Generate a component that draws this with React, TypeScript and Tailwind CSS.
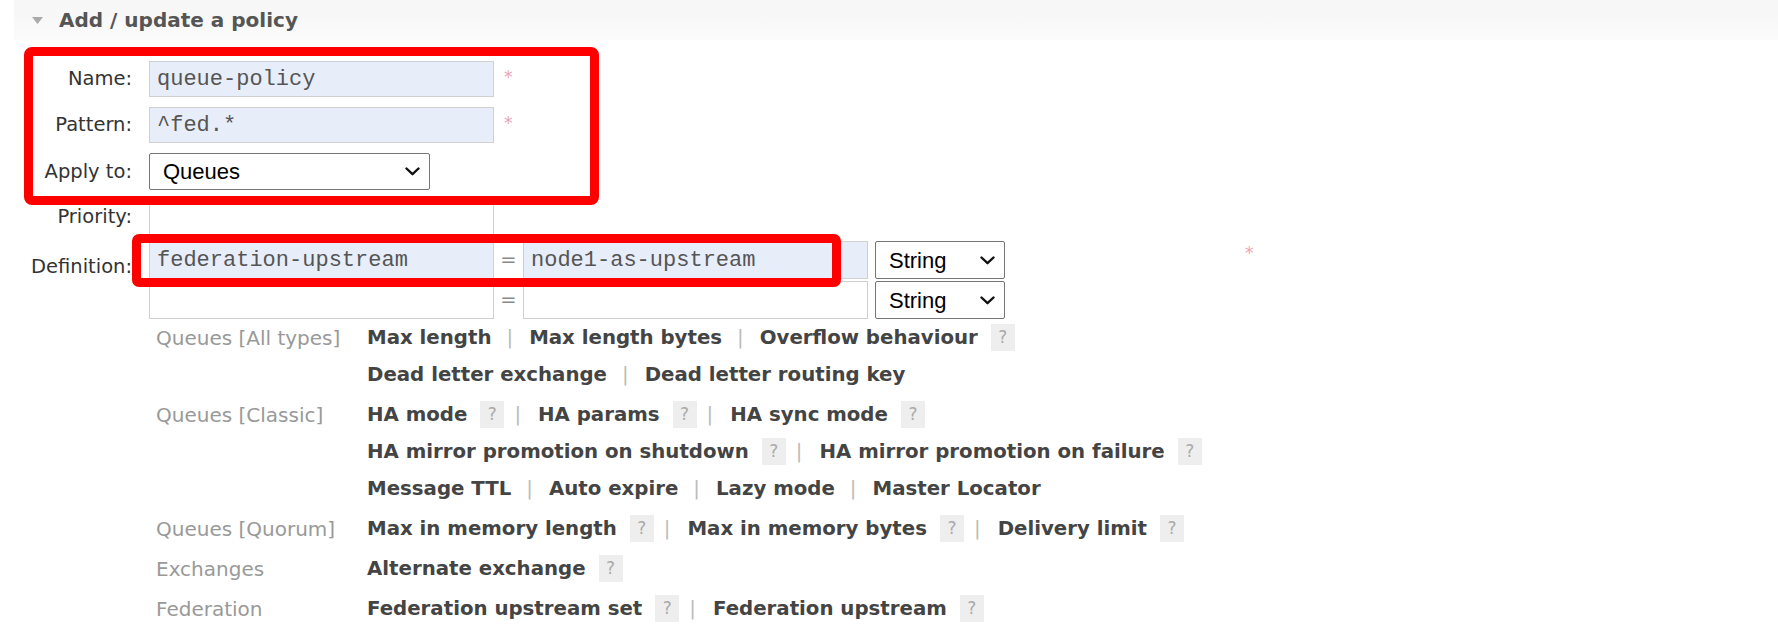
import React, { Fragment } from "react";

type Item = { t: string; help?: boolean };

const Help = () => (
  <span className="inline-flex items-center justify-center w-[24px] h-[27px] bg-[#eeeeee] text-[#aaaaaa] text-[17px] font-normal ml-[13px]">
    ?
  </span>
);

const Line = ({ items }: { items: Item[] }) => (
  <div className="h-[37px] flex items-center whitespace-nowrap">
    {items.map((it, i) => (
      <Fragment key={i}>
        {i > 0 && (
          <span
            className={
              items[i - 1].help
                ? "text-[#bbbbbb] font-normal ml-[10px] mr-[17px]"
                : "text-[#bbbbbb] font-normal ml-[15px] mr-[16px]"
            }
          >
            |
          </span>
        )}
        <span className="font-bold text-[#444444]">{it.t}</span>
        {it.help && <Help />}
      </Fragment>
    ))}
  </div>
);

const Group = ({ label, lines, first }: { label: string; lines: Item[][]; first?: boolean }) => (
  <div className={first ? "flex" : "flex mt-[3px]"}>
    <div className="w-[367px] pl-[156px] shrink-0 h-[37px] flex items-center whitespace-nowrap text-[#999999] text-[20px]">
      {label}
    </div>
    <div className="flex flex-col">
      {lines.map((l, i) => (
        <Line key={i} items={l} />
      ))}
    </div>
  </div>
);

const Chevron = () => (
  <svg width="15" height="9" viewBox="0 0 15 9" fill="none">
    <path d="M1.5 1.5 L7.5 7.2 L13.5 1.5" stroke="#111" strokeWidth="2.4" strokeLinecap="round" strokeLinejoin="round" />
  </svg>
);

const Select = ({ value, w }: { value: string; w: string }) => (
  <div
    className={`${w} h-full flex items-center justify-between pl-[13px] pr-[9px] bg-white border border-[#767676] rounded-[2px] font-['Liberation_Sans',sans-serif] text-[22px] text-black`}
  >
    <span>{value}</span>
    <Chevron />
  </div>
);

const TextBox = ({ value, blue }: { value?: string; blue?: boolean }) => (
  <div
    className={`w-[345px] h-full flex items-center pl-[7px] border border-[#d0d0d0] font-['Liberation_Mono',monospace] text-[22px] text-[#555555] whitespace-nowrap ${
      blue ? "bg-[#e8eef9]" : "bg-white"
    }`}
  >
    {value}
  </div>
);

const Label = ({ children }: { children: React.ReactNode }) => (
  <div className="w-[149px] shrink-0 pr-[17px] text-right text-[#333333] whitespace-nowrap">{children}</div>
);

const Star = ({ cls }: { cls: string }) => <span className={`text-[#f0a3b3] text-[17px] leading-none ${cls}`}>*</span>;

export default function App() {
  return (
    <div className="relative w-[1778px] h-[636px] bg-white overflow-hidden font-['DejaVu_Sans',Verdana,sans-serif] text-[19.5px]">
      {/* header */}
      <div className="ml-[14px] h-[40px] bg-gradient-to-b from-[#f7f7f7] via-[#f8f8f8] to-[#fbfbfb] flex items-center pl-[18px] gap-[16px]">
        <svg width="11" height="7" viewBox="0 0 11 7">
          <path d="M0 0 H11 L5.5 7 Z" fill="#aaaaaa" />
        </svg>
        <span className="font-bold text-[20px] text-[#555555]">Add / update a policy</span>
      </div>

      {/* form */}
      <div className="flex flex-col">
        <div className="flex items-center h-[36px] mt-[21px]">
          <Label>Name:</Label>
          <TextBox value="queue-policy" blue />
          <Star cls="ml-[10px] self-start mt-[8px]" />
        </div>
        <div className="flex items-center h-[36px] mt-[10px]">
          <Label>Pattern:</Label>
          <TextBox value="^fed.*" blue />
          <Star cls="ml-[10px] self-start mt-[8px]" />
        </div>
        <div className="flex items-center h-[37px] mt-[10px]">
          <Label>Apply to:</Label>
          <Select value="Queues" w="w-[281px]" />
        </div>
        <div className="flex items-center h-[36px] mt-[9px]">
          <Label>Priority:</Label>
          <TextBox />
        </div>
        <div className="flex mt-[6px]">
          <div className="pt-[11px]">
            <Label>Definition:</Label>
          </div>
          <div className="flex flex-col gap-[2px]">
            <div className="flex h-[38px]">
              <TextBox value="federation-upstream" blue />
              <div className="w-[29px] flex items-center justify-center text-[#888888]">=</div>
              <TextBox value="node1-as-upstream" blue />
              <div className="ml-[7px] h-full">
                <Select value="String" w="w-[130px]" />
              </div>
            </div>
            <div className="flex h-[38px]">
              <TextBox />
              <div className="w-[29px] flex items-center justify-center text-[#888888]">=</div>
              <TextBox />
              <div className="ml-[7px] h-full">
                <Select value="String" w="w-[130px]" />
              </div>
            </div>
          </div>
          <Star cls="ml-[240px] mt-[4px]" />
        </div>

        {/* help links */}
        <div className="flex flex-col mt-0 text-[19.75px]">
          <Group
            first
            label="Queues [All types]"
            lines={[
              [{ t: "Max length" }, { t: "Max length bytes" }, { t: "Overflow behaviour", help: true }],
              [{ t: "Dead letter exchange" }, { t: "Dead letter routing key" }],
            ]}
          />
          <Group
            label="Queues [Classic]"
            lines={[
              [
                { t: "HA mode", help: true },
                { t: "HA params", help: true },
                { t: "HA sync mode", help: true },
              ],
              [
                { t: "HA mirror promotion on shutdown", help: true },
                { t: "HA mirror promotion on failure", help: true },
              ],
              [{ t: "Message TTL" }, { t: "Auto expire" }, { t: "Lazy mode" }, { t: "Master Locator" }],
            ]}
          />
          <Group
            label="Queues [Quorum]"
            lines={[
              [
                { t: "Max in memory length", help: true },
                { t: "Max in memory bytes", help: true },
                { t: "Delivery limit", help: true },
              ],
            ]}
          />
          <Group label="Exchanges" lines={[[{ t: "Alternate exchange", help: true }]]} />
          <Group
            label="Federation"
            lines={[[{ t: "Federation upstream set", help: true }, { t: "Federation upstream", help: true }]]}
          />
        </div>
      </div>

      {/* annotation boxes */}
      <div className="absolute left-[24px] top-[47px] w-[575px] h-[158px] border-[9px] border-[#ff0000] rounded-[8px] pointer-events-none" />
      <div className="absolute left-[132px] top-[234px] w-[709px] h-[53px] border-[9px] border-[#ff0000] rounded-[7px] pointer-events-none" />
    </div>
  );
}
